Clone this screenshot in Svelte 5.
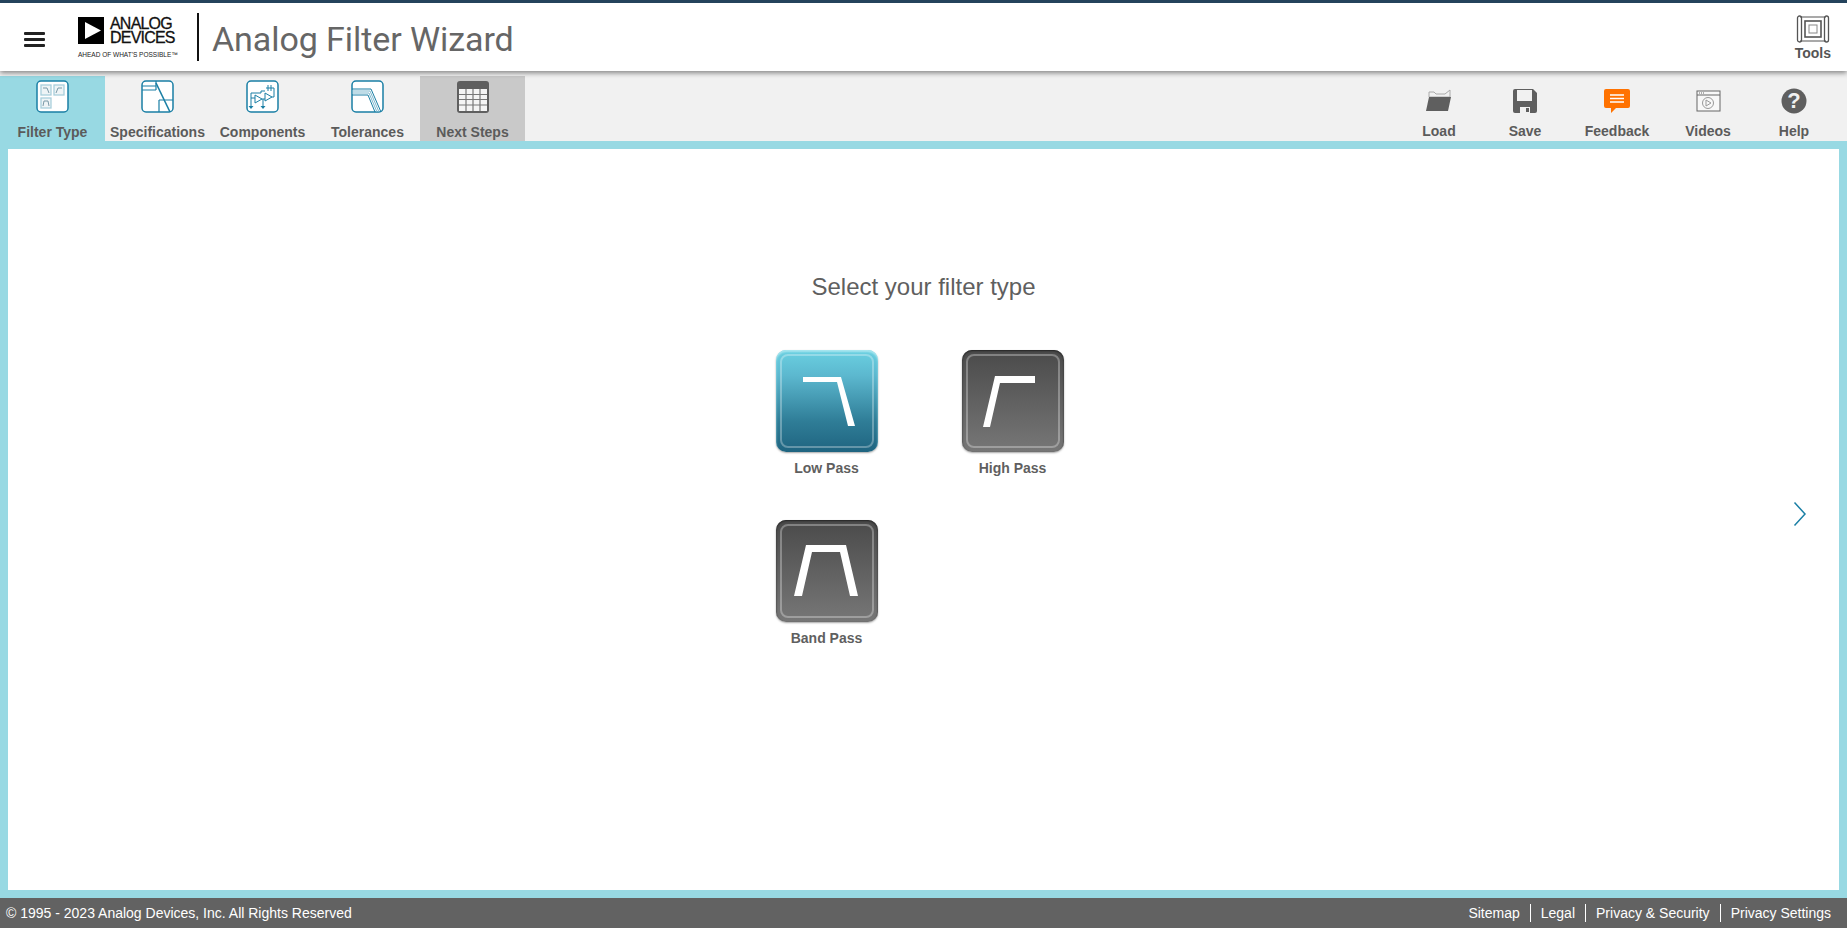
<script>
  const filters = [
    { name: "Low Pass", on: true, points: "27,27 65,27 79,76 72,76 61,32 27,32" },
    { name: "High Pass", on: false, points: "33,26 73,26 73,33 38,33 28,77 21,77" },
    { name: "Band Pass", on: false, points: "30,25 70,25 82,76 74,76 64,32 36,32 26,76 18,76" },
  ];
  const footerLinks = ["Sitemap", "Legal", "Privacy & Security", "Privacy Settings"];
</script>

<div class="page">
  <header class="top">
    <button class="burger" aria-label="Menu"><span></span><span></span><span></span></button>
    <div class="logo">
      <div class="logo-main">
        <svg width="26" height="27" viewBox="0 0 26 27"><rect width="26" height="27" fill="#000" /><path d="M7 5 L23 13.5 L7 22Z" fill="#fff" /></svg>
        <div class="logo-name">ANALOG<br />DEVICES</div>
      </div>
      <div class="logo-tag">AHEAD OF WHAT'S POSSIBLE™</div>
    </div>
    <div class="title">Analog Filter Wizard</div>
    <div class="tools">
      <svg width="34" height="30" viewBox="0 0 34 30" fill="none" stroke="#555">
        <path d="M4 3 H30 M4 27 H30" stroke-width="1.2" />
        <rect x="1.5" y="2" width="4" height="26" rx="2" stroke-width="1.3" />
        <rect x="28.5" y="2" width="4" height="26" rx="2" stroke-width="1.3" />
        <rect x="9" y="7" width="16" height="16" stroke-width="1.6" />
        <rect x="13" y="11" width="8" height="8" stroke-width="1" stroke="#888" />
      </svg>
      <span>Tools</span>
    </div>
  </header>

  <nav class="bar">
    <div class="tab active">
      <svg width="34" height="34" viewBox="0 0 34 34" fill="none">
        <rect x="1" y="1" width="31" height="31" rx="4" fill="#fff" stroke="#1a7fa5" stroke-width="1.5" />
        <g fill="#eef4f6" stroke="#a9cfdc" stroke-width="1.3"><rect x="5" y="5" width="10" height="10" /><rect x="18" y="5" width="10" height="10" /><rect x="5" y="18" width="10" height="10" /></g>
        <path d="M7 8 H11 L13 13 M26 8 H22 L20 13 M7 26 L8 21 H12 L13 26" stroke="#7a9aa8" />
      </svg>
      <span>Filter Type</span>
    </div>
    <div class="tab">
      <svg width="34" height="34" viewBox="0 0 34 34" fill="none" stroke="#1a7fa5">
        <rect x="1" y="1" width="31" height="31" rx="4" fill="#fff" stroke-width="1.5" />
        <path d="M1 10 H15 M1 6 H15 M15 1 V10" stroke-width="1.2" />
        <path d="M15 3 L29 32" stroke-width="1.6" />
        <path d="M18 20 H32 M18 20 V32" stroke-width="1.2" />
      </svg>
      <span>Specifications</span>
    </div>
    <div class="tab">
      <svg width="34" height="34" viewBox="0 0 34 34" fill="none" stroke="#1a7fa5">
        <rect x="1" y="1" width="31" height="31" rx="4" fill="#fff" stroke-width="1.5" />
        <path d="M9 15 L16 19 L9 23Z M19 13 L26 17 L19 21Z" stroke-width="1" />
        <path d="M5 13 V26 M5 18 H9 M5 13 H15 V11 H19 M16 19 H19 M17 19 V26 M20 8 H28 V17 H26 M22 5 V11 M25 5 V11" stroke-width="1" />
        <path d="M2.5 26 H7.5 L5 29Z M14.5 26 H19.5 L17 29Z" fill="#1a7fa5" stroke="none" />
      </svg>
      <span>Components</span>
    </div>
    <div class="tab">
      <svg width="34" height="34" viewBox="0 0 34 34" fill="none" stroke="#1a7fa5" stroke-width="1">
        <rect x="1" y="1" width="31" height="31" rx="4" fill="#fff" stroke-width="1.5" />
        <path d="M1 11 H19 L28 32 M1 13 H18 L26 32" stroke="#7fb9cf" />
        <path d="M1 15 H17 L24 32 M1 9 H20 L30 32" />
      </svg>
      <span>Tolerances</span>
    </div>
    <div class="tab next">
      <svg width="34" height="34" viewBox="0 0 34 34">
        <rect x="1" y="1" width="32" height="32" rx="3" fill="#5f5f5f" />
        <path d="M3 9 H31 V31 H3Z" fill="#f4f4f4" />
        <path d="M3 14.5 H31 M3 19.5 H31 M3 25 H31 M10 9 V31 M17 9 V31 M24 9 V31" stroke="#777" stroke-width="1.2" />
      </svg>
      <span>Next Steps</span>
    </div>

    <div class="actions">
      <div class="action w-load">
        <svg width="26" height="24" viewBox="0 0 26 24"><path d="M3 6 V3 H8 L10 5 H19 L24 1 V8 H3Z" fill="none" stroke="#aaa" /><path d="M3 8 H25 L22 22 H0Z" fill="#5f5f5f" /></svg>
        <span>Load</span>
      </div>
      <div class="action w-save">
        <svg width="26" height="26" viewBox="0 0 26 26"><path d="M3 1 H21 L25 5 V23 Q25 25 23 25 H3 Q1 25 1 23 V3 Q1 1 3 1Z" fill="#5f5f5f" /><rect x="5" y="2" width="15" height="11" fill="#f1f1f1" /><rect x="8" y="19" width="10" height="6" fill="#f1f1f1" /><rect x="14" y="20" width="3" height="4" fill="#5f5f5f" /></svg>
        <span>Save</span>
      </div>
      <div class="action w-feed">
        <svg width="28" height="26" viewBox="0 0 28 26"><path d="M3 1 H25 Q27 1 27 3 V18 Q27 20 25 20 H13 L8 25 V20 H3 Q1 20 1 18 V3 Q1 1 3 1Z" fill="#ff7200" /><path d="M7 7 H21 M7 10.5 H21 M7 14 H21" stroke="#fff" stroke-width="1.3" /></svg>
        <span>Feedback</span>
      </div>
      <div class="action w-vid">
        <svg width="25" height="24" viewBox="0 0 25 24" fill="none" stroke="#666"><rect x="1" y="2" width="23" height="20" fill="#f8f8f8" /><path d="M1 6 H24" /><circle cx="12" cy="14" r="5.5" stroke="#999" /><path d="M10 11 L15 14 L10 17Z" stroke="#999" /><path d="M3 4 H8" stroke-dasharray="1 1" /></svg>
        <span>Videos</span>
      </div>
      <div class="action w-help">
        <svg width="26" height="26" viewBox="0 0 26 26"><circle cx="13" cy="13" r="12.5" fill="#5f5f5f" /><text x="13" y="20" text-anchor="middle" class="qmark">?</text></svg>
        <span>Help</span>
      </div>
    </div>
  </nav>

  <main class="main">
    <h1>Select your filter type</h1>
    <div class="grid">
      {#each filters as f}
        <div class="filter">
          <div class="tile" class:on={f.on}>
            <svg width="102" height="102" viewBox="0 0 102 102"><polygon points={f.points} fill="#fff" /></svg>
          </div>
          <span>{f.name}</span>
        </div>
      {/each}
    </div>
    <svg class="chevron" width="14" height="26" viewBox="0 0 14 26" fill="none"><path d="M1.5 1.5 L12 13 L1.5 24.5" stroke="#1a7fa5" stroke-width="1.5" /></svg>
  </main>

  <footer class="foot">
    <span>© 1995 - 2023 Analog Devices, Inc. All Rights Reserved</span>
    <div class="links">
      {#each footerLinks as link}
        <span>{link}</span>
      {/each}
    </div>
  </footer>
</div>

<style>
  :global(body) {
    margin: 0;
    font-family: "Liberation Sans", Arial, sans-serif;
    background: #fff;
  }

  .page {
    height: 928px;
    display: flex;
    flex-direction: column;
    overflow: hidden;
  }

  .top {
    height: 68px;
    flex: none;
    border-top: 3px solid #24435c;
    display: flex;
    align-items: center;
    background: #fff;
    box-shadow: 0 2px 5px rgba(0, 0, 0, 0.45);
    position: relative;
    padding-left: 24px;
  }

  .burger {
    width: 21px;
    padding: 0;
    border: 0;
    background: none;
    display: flex;
    flex-direction: column;
    gap: 3px;
    margin-right: 33px;
    position: relative;
    top: 2px;
  }

  .burger span {
    height: 3px;
    border-radius: 1px;
    background: #222;
  }

  .logo {
    width: 119px;
  }

  .logo-main {
    display: flex;
    gap: 6px;
    align-items: center;
  }

  .logo-main svg {
    flex: none;
  }

  .logo-name {
    font-size: 16px;
    line-height: 14px;
    letter-spacing: -0.8px;
    color: #111;
    -webkit-text-stroke: 0.3px #111;
  }

  .logo-tag {
    font-size: 6.5px;
    margin-top: 6px;
    color: #222;
    white-space: nowrap;
  }

  .title {
    border-left: 2px solid #111;
    height: 48px;
    padding-left: 13px;
    line-height: 52px;
    font-family: Roboto, sans-serif;
    font-weight: 400;
    font-size: 34px;
    letter-spacing: -0.08px;
    color: #666;
  }

  .tools {
    margin-left: auto;
    margin-right: 16px;
    display: flex;
    flex-direction: column;
    align-items: center;
    font-size: 14px;
    font-weight: bold;
    color: #555;
    gap: 1px;
  }

  .bar {
    height: 70px;
    flex: none;
    background: #f1f1f1;
    display: flex;
    align-items: flex-end;
  }

  .tab {
    width: 105px;
    height: 65px;
    display: flex;
    flex-direction: column;
    align-items: center;
    font-size: 14px;
    font-weight: bold;
    color: #5b5b5b;
    padding-top: 4px;
    box-sizing: border-box;
    gap: 10px;
    white-space: nowrap;
  }

  .tab svg {
    display: block;
  }

  .tab.active {
    background: #98d9e3;
  }

  .tab.next {
    background: #c9c9c9;
  }

  .actions {
    margin-left: auto;
    padding-right: 9px;
    display: flex;
  }

  .action {
    height: 65px;
    box-sizing: border-box;
    display: flex;
    flex-direction: column;
    align-items: center;
    justify-content: space-between;
    padding: 12px 0 2px;
    font-size: 14px;
    font-weight: bold;
    color: #5b5b5b;
  }

  .action svg {
    height: 26px;
  }

  .w-load { width: 86px; }
  .w-save { width: 86px; }
  .w-feed { width: 98px; }
  .w-vid { width: 84px; }
  .w-help { width: 88px; }

  .qmark {
    font-size: 22px;
    font-weight: bold;
    fill: #f1f1f1;
    font-family: "Liberation Sans", sans-serif;
  }

  .main {
    flex: 1;
    border: solid #98d9e3;
    border-width: 8px;
    background: #fff;
    position: relative;
    display: flex;
    flex-direction: column;
    align-items: center;
  }

  h1 {
    margin: 125px 0 0;
    font-size: 24px;
    font-weight: normal;
    line-height: 26px;
    color: #5f5f5f;
  }

  .grid {
    margin-top: 50px;
    display: grid;
    grid-template-columns: 186px 186px;
    grid-auto-rows: 170px;
    transform: translateX(-4px);
  }

  .filter {
    display: flex;
    flex-direction: column;
    align-items: center;
    gap: 8px;
    font-size: 14px;
    font-weight: bold;
    color: #5f5f5f;
  }

  .tile {
    width: 102px;
    height: 102px;
    border-radius: 10px;
    position: relative;
    background: linear-gradient(#4a4a4a, #777);
    box-shadow: 0 1px 2px rgba(0, 0, 0, 0.35), inset 0 1px 2px #222;
  }

  .tile.on {
    background: linear-gradient(#6ad0e1 0%, #5cb8cf 25%, #2f7d97 70%, #1f6480 100%);
    box-shadow: 0 1px 2px rgba(0, 0, 0, 0.35), inset 0 2px 2px #a9e6ef;
  }

  .tile::before {
    content: "";
    position: absolute;
    inset: 4px;
    border: 2px solid rgba(255, 255, 255, 0.3);
    border-radius: 8px;
  }

  .tile svg {
    position: absolute;
    inset: 0;
  }

  .chevron {
    position: absolute;
    right: 32px;
    top: 352px;
  }

  .foot {
    height: 30px;
    flex: none;
    background: #626262;
    color: #fff;
    font-size: 14px;
    display: flex;
    align-items: center;
    justify-content: space-between;
    padding: 0 6px 0 6px;
  }

  .links {
    display: flex;
  }

  .links span {
    padding: 0 10px;
    border-left: 1px solid #fff;
    line-height: 18px;
  }

  .links span:first-child {
    border-left: 0;
  }
</style>
